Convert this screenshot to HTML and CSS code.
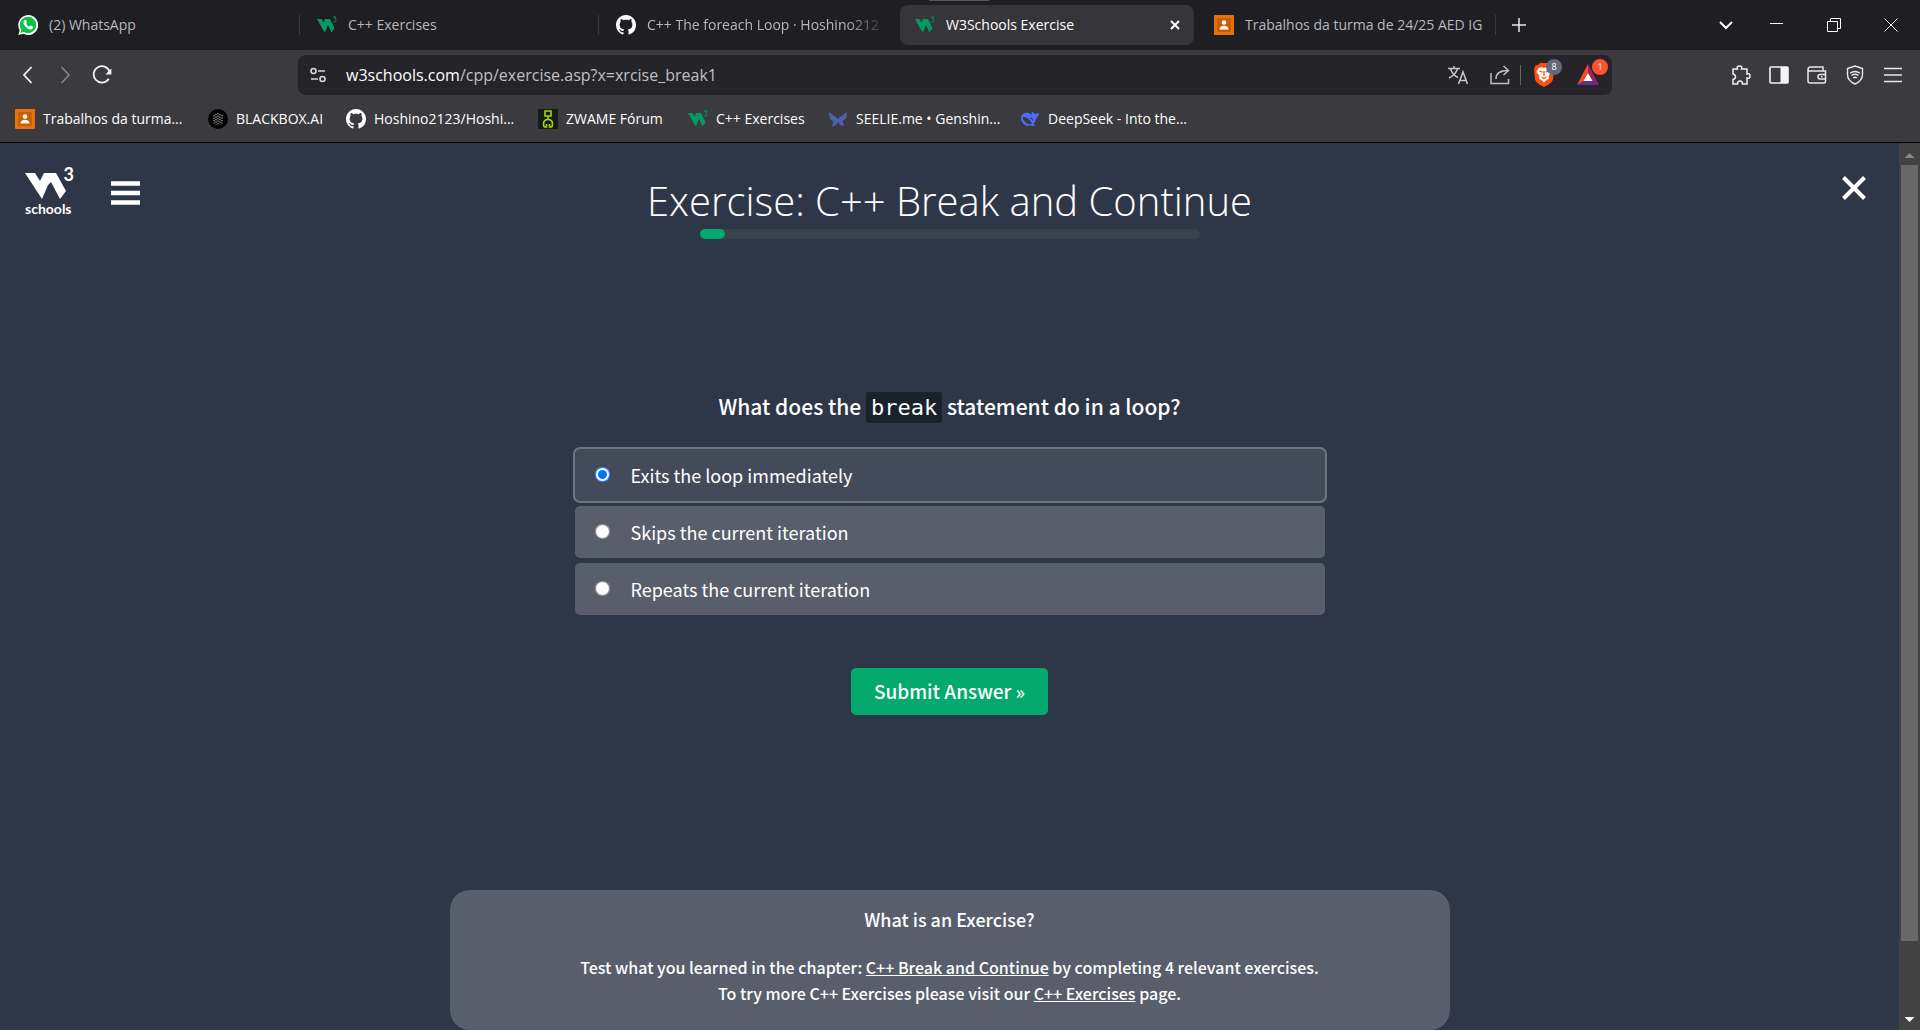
FILE: index.html
```html
<!DOCTYPE html>
<html lang="en">
<head>
<meta charset="utf-8">
<title>W3Schools Exercise</title>
<link rel="stylesheet" href="styles.css">
</head>
<body>
<svg class="defs" aria-hidden="true">
  <symbol id="w3" viewBox="0 0 20 20">
    <path d="M0 4h4.500l2 3.400L8 4h5l4.500 9-3 4.500L11 10l-3 7.500L5.500 14z" fill="#059862"/>
    <path d="M16 2h3l-1.300 2c2 .2 1.600 3-.4 3-1 0-1.500-.5-1.500-.5" fill="none" stroke="#059862"/>
  </symbol>
  <symbol id="github" viewBox="0 0 16 16">
    <path fill="#fff" d="M8 0C3.580 0 0 3.580 0 8c0 3.540 2.290 6.530 5.470 7.590.4.07.55-.17.55-.38 0-.19-.01-.82-.01-1.490-2.010.37-2.530-.49-2.690-.94-.09-.23-.48-.94-.82-1.130-.28-.15-.68-.52-.01-.53.63-.01 1.080.58 1.230.82.72 1.210 1.870.87 2.330.66.07-.52.28-.87.51-1.070-1.780-.2-3.640-.89-3.640-3.950 0-.87.31-1.590.82-2.150-.08-.2-.36-1.020.08-2.120 0 0 .67-.21 2.200.82.64-.18 1.320-.27 2-.27s1.360.09 2 .27c1.530-1.040 2.200-.82 2.200-.82.44 1.100.16 1.920.08 2.120.51.56.82 1.270.82 2.150 0 3.070-1.870 3.750-3.650 3.950.29.25.54.73.54 1.480 0 1.070-.01 1.930-.01 2.200 0 .21.15.46.55.38A8.010 8.010 0 0 0 16 8c0-4.420-3.580-8-8-8z"/>
  </symbol>
  <symbol id="classroom" viewBox="0 0 20 20">
    <rect width="20" height="20" rx="1" fill="#e8710a"/>
    <rect x="3" y="3" width="14" height="14" fill="#c75f00"/>
    <circle cx="10" cy="7.500" r="2.300" fill="#fff"/>
    <path d="M5.500 14.500c0-2.500 2-3.700 4.500-3.700s4.500 1.200 4.500 3.700z" fill="#fff"/>
  </symbol>
</svg>

<header class="browser">
  <div class="tabstrip">
    <nav class="tabs" aria-label="Tabs">
      <a class="tab" href="#"><svg class="icon" viewBox="0 0 20 20"><path d="M10 0a10 10 0 1 1-4.600 18.800L.3 20l1.400-4.800A10 10 0 0 1 10 0z" fill="#fff"/><circle cx="10" cy="10" r="8.300" fill="#0cc143"/><path d="M2.400 18l1.200-4 2.600 2.700z" fill="#0cc143"/><path d="M6.500 5.300c.7-.8 1.500-.5 1.700.1l.7 1.600c.2.600-.8 1.300-.8 1.600.7 1.500 1.800 2.500 3.300 3.200.4 0 1-1.300 1.500-1.200l2 1c.3.200.2 1.500-.4 2.100-1.500 1.500-4.100.5-6.200-1.300-2.700-2.400-3.800-5-1.800-7.100z" fill="#fff"/></svg><span class="tab-title">(2) WhatsApp</span></a>
      <a class="tab" href="#"><svg class="icon"><use href="#w3"/></svg><span class="tab-title">C++ Exercises</span></a>
      <a class="tab tab-before" href="#"><svg class="icon"><use href="#github"/></svg><span class="tab-title fade">C++ The foreach Loop · Hoshino212</span></a>
      <div class="tab active"><svg class="icon"><use href="#w3"/></svg><span class="tab-title">W3Schools Exercise</span><button class="bare" aria-label="Close tab"><svg width="10" height="10" viewBox="0 0 10 10"><path d="M1 1l8 8M9 1L1 9" stroke="#fff" stroke-width="2"/></svg></button></div>
      <a class="tab" href="#"><svg class="icon"><use href="#classroom"/></svg><span class="tab-title">Trabalhos da turma de 24/25 AED IG</span></a>
    </nav>
    <button class="bare new-tab" aria-label="New tab"><svg width="14" height="14" viewBox="0 0 14 14"><path d="M7 0v14M0 7h14" stroke="#e8e8e8" stroke-width="1.500"/></svg></button>
    <div class="window-controls">
      <button class="bare tab-search" aria-label="Search tabs"><svg width="14" height="14" viewBox="0 0 14 14"><path d="M1 4l6 6 6-6" fill="none" stroke="#fff" stroke-width="2"/></svg></button>
      <button class="bare" aria-label="Minimize"><svg width="14" height="14" viewBox="0 0 14 14"><path d="M0 5.500h13" stroke="#fff"/></svg></button>
      <button class="bare" aria-label="Restore"><svg width="14" height="14" viewBox="0 0 14 14"><path d="M.5 3.500h10v10H.5zM3.500 3.500v-3h10v10h-3" fill="none" stroke="#fff"/></svg></button>
      <button class="bare" aria-label="Close window"><svg width="14" height="14" viewBox="0 0 14 14"><path d="M.5.5l13 13M13.500.5l-13 13" stroke="#fff"/></svg></button>
    </div>
    <span class="grip"></span>
  </div>

  <div class="toolbar">
    <div class="nav-buttons">
      <button class="bare" aria-label="Back"><svg width="20" height="20" viewBox="0 0 20 20"><path d="M13.500 2L6 10l7.500 8" fill="none" stroke="#f2f2f2" stroke-width="1.800"/></svg></button>
      <button class="bare" aria-label="Forward"><svg width="20" height="20" viewBox="0 0 20 20"><path d="M6.500 2l7.500 8-7.500 8" fill="none" stroke="#88888b" stroke-width="1.500"/></svg></button>
      <button class="bare" aria-label="Reload"><svg width="20" height="20" viewBox="0 0 20 20"><path d="M16.800 13.800A8.200 8.200 0 1 1 18 8" fill="none" stroke="#f2f2f2" stroke-width="1.800"/><path d="M19.400 3.500v6h-6z" fill="#f2f2f2"/></svg></button>
    </div>
    <div class="address">
      <button class="bare" aria-label="Site settings"><svg width="16" height="16" viewBox="0 0 16 16" fill="none" stroke="#d8d8dc" stroke-width="1.600"><circle cx="3.500" cy="4" r="2.500"/><path d="M8 4h7M1 12h7"/><circle cx="12.500" cy="12" r="2.500"/></svg></button>
      <div class="url" role="textbox" aria-label="Address" tabindex="0"><span class="host">w3schools.com</span>/cpp/exercise.asp?x=xrcise_break1</div>
      <div class="address-tools">
        <button class="bare" aria-label="Translate"><svg width="20" height="20" viewBox="0 0 20 20" fill="none" stroke="#c8c8cc" stroke-width="1.500"><path d="M0 3.500h12M6 1v2.500M2.500 4c1.500 4 4 7 7.500 8.500M9.500 4C8 8 5 11 1 13M10.500 19L15 7l4.500 12M12 15.500h6"/></svg></button>
        <button class="bare" aria-label="Share"><svg width="20" height="20" viewBox="0 0 20 20" fill="none" stroke="#c0c0c4" stroke-width="1.500"><path d="M1 8v10.500h17.500V14M6 14c0-6 4-8.500 12-8.500M13.500 1l5 4.500-5 4.500"/></svg></button>
        <span class="divider"></span>
        <button class="bare badge-host" aria-label="Shields"><svg width="20" height="24" viewBox="0 0 20 24"><path d="M4 2l2-2h8l2 2 2.500.5L20 6l-1 10c-1 4-5 6-9 8-4-2-8-4-9-8L0 6l1.500-3.500z" fill="#fb5010"/><path d="M4.500 5l3-.7L10 5l2.500-.7 3 .7 2 4-3 4 .5 2.500-3 2L10 19.500l-2-2-3-2L5.500 13l-3-4z" fill="#fff"/><path d="M5.500 8l3 1.200M14.500 8l-3 1.200M10 8v5M7.500 14l2.500 1.500 2.500-1.500" fill="none" stroke="#fb5010" stroke-width="1.300"/></svg><span class="badge gray">8</span></button>
        <button class="bare badge-host" aria-label="Rewards"><svg width="24" height="24" viewBox="0 0 24 24"><path d="M12 1L1 22l7-4 4-8z" fill="#ff4724"/><path d="M12 1l11 21-7-4-4-8z" fill="#9e1f63"/><path d="M1 22h22l-7-4H8z" fill="#662d91"/><path d="M12 10l4.500 8h-9z" fill="#fff"/></svg><span class="badge red">1</span></button>
      </div>
    </div>
    <div class="extensions">
      <button class="bare" aria-label="Extensions"><svg width="20" height="20" viewBox="0 0 20 20"><path d="M2 4h4.500C5.500 1.500 7 1 8.500 1s3 .5 2 3H16v5c2.500-1 3 .5 3 2s-.5 3-3 2v6h-4.500c0-2.500-1-3-2.500-3s-2.500.5-2.500 3H2v-4.500c2-.5 2.500-1 2.500-2.500S4 9.500 2 9z" fill="none" stroke="#f0f0f0" stroke-width="1.500"/></svg></button>
      <button class="bare" aria-label="Sidebar"><svg width="20" height="20" viewBox="0 0 20 20"><rect x="1" y="2" width="18" height="16" rx="1" fill="none" stroke="#f4f4f4" stroke-width="1.600"/><path d="M11.500 2H19v16h-7.500z" fill="#f4f4f4"/></svg></button>
      <button class="bare" aria-label="Wallet"><svg width="20" height="20" viewBox="0 0 20 20" fill="none" stroke="#e8e8e8" stroke-width="1.500"><path d="M1 4.500V16q0 2 2 2h14q1.500 0 1.500-1.500V6H3Q1 6 1 4.200T3 2h13v4M19 9.500h-6q-2 0-2 2.200t2 2.300h6M14 11.700h1.500"/></svg></button>
      <button class="bare" aria-label="VPN"><svg width="20" height="20" viewBox="0 0 20 20" fill="none" stroke="#e8e8e8" stroke-width="1.400"><path d="M10 1l7.500 2.500v6c0 4-3 7.500-7.500 9.500-4.500-2-7.500-5.500-7.500-9.500v-6zM5 8.200q5-3.500 10 0M6.500 10.500q3.500-2.500 7 0M8.200 12.800q1.800-1.200 3.600 0"/></svg></button>
      <button class="bare" aria-label="Menu"><svg width="20" height="20" viewBox="0 0 20 20"><path d="M1 3.500h18M1 10h18M1 16.500h18" stroke="#e8e8e8" stroke-width="1.500"/></svg></button>
    </div>
  </div>

  <nav class="bookmarks" aria-label="Bookmarks">
    <a href="#"><svg class="icon"><use href="#classroom"/></svg>Trabalhos da turma...</a>
    <a href="#"><svg class="icon" viewBox="0 0 20 20"><circle cx="10" cy="10" r="10" fill="#000"/><path d="M10 4v12M6 6v8.500M14 6v8.500M8 5v10.500M12 5v10.500" stroke="#a8a8a8" stroke-width="1.300" stroke-dasharray="1.300 1.200"/></svg>BLACKBOX.AI</a>
    <a href="#"><svg class="icon"><use href="#github"/></svg>Hoshino2123/Hoshi...</a>
    <a href="#"><svg class="icon" viewBox="0 0 20 20"><rect width="20" height="20" fill="#161a16"/><path d="M7 2h6v5H7zM10 7v3M6 18l-.5-3q0-4.500 4.500-4.500t4.500 4.500l-.5 3M6 18h2.500v-3M14 18h-2.500v-3" fill="none" stroke="#a4d80c" stroke-width="1.600"/></svg>ZWAME Fórum</a>
    <a href="#"><svg class="icon"><use href="#w3"/></svg>C++ Exercises</a>
    <a href="#"><svg class="icon" viewBox="0 0 20 20"><path d="M1 3l7 5 2 2 2-2 7-5c0 5-1 8-4.500 8.500L16 17l-4-1-2-3-2 3-4 2 1.500-5.500C2 11 1 8 1 3z" fill="#4e5fb0"/></svg>SEELIE.me • Genshin...</a>
    <a href="#"><svg class="icon" viewBox="0 0 20 20"><path d="M1 9c0-4 4-6 8-5 1 .5 2 1 2.500 2 .5-1.500 0-2.500.5-3.500 1 .5 1.500 2 3 2.500 1.500 0 2.500-1 4-1 0 3-1.500 4.500-3 5 0 3-1.500 4.500-2.500 6l1.500 1.500c-1.500.8-3 .5-4 0C5.500 18 1 14 1 9z" fill="#4d6bfe"/><path d="M3 8.500c3-.5 7 2.500 8.500 6-3 1.500-7-1-8.500-6zM10 9q2.500 0 3 2.500" fill="#3b3b3f" stroke="#3b3b3f"/></svg>DeepSeek - Into the...</a>
  </nav>
</header>

<div class="viewport">
  <div class="page">
    <header class="page-header">
      <div class="header-left">
        <a class="logo" href="#" aria-label="W3Schools home">
          <span class="logo-top"><svg width="42" height="28" viewBox="0 0 42 28"><path d="M0 1h10l5 8 4-8h12l10 18-6 8-9-17-3 3-6 14z" fill="#fff"/></svg><span class="logo-three">3</span></span>
          <span class="logo-word">schools</span>
        </a>
        <button class="bare" aria-label="Open menu"><svg width="30" height="24" viewBox="0 0 30 24"><path d="M0 2.500h29M0 12h29M0 21.500h29" stroke="#fff" stroke-width="4.600"/></svg></button>
      </div>
      <div class="header-mid">
        <h1>Exercise: C++ Break and Continue</h1>
        <div class="progress" role="progressbar" aria-valuenow="5" aria-valuemin="0" aria-valuemax="100"><div class="progress-fill" style="width: 5%"></div></div>
      </div>
      <div class="header-right"><button class="bare" aria-label="Close exercise"><svg width="24" height="24" viewBox="0 0 24 24"><path d="M1.500 1.500l21 21M22.500 1.500l-21 21" stroke="#fff" stroke-width="4"/></svg></button></div>
    </header>

    <form class="exercise">
      <h2>What does the <code>break</code> statement do in a loop?</h2>
      <div class="options">
        <label class="option selected"><input type="radio" name="answer" checked>Exits the loop immediately</label>
        <label class="option"><input type="radio" name="answer">Skips the current iteration</label>
        <label class="option"><input type="radio" name="answer">Repeats the current iteration</label>
      </div>
      <button class="submit" type="button">Submit Answer »</button>
    </form>

    <section class="about">
      <h3>What is an Exercise?</h3>
      <p>Test what you learned in the chapter: <a href="#">C++ Break and Continue</a> by completing 4 relevant exercises.<br>To try more C++ Exercises please visit our <a href="#">C++ Exercises</a> page.</p>
    </section>
  </div>
  <div class="scrollbar" aria-hidden="true">
    <span class="arrow up"></span>
    <span class="track"><span class="thumb"></span></span>
    <span class="arrow down"></span>
  </div>
</div>
</body>
</html>
```
FILE: styles.css
```css
* { box-sizing: border-box; }

body {
  margin: 0;
  min-height: 100vh;
  display: flex;
  flex-direction: column;
  background: #2e3748;
  color: #fff;
  font-family: "Noto Sans CJK SC", "Open Sans", sans-serif;
}

a { color: inherit; }
svg { display: block; flex: none; }
.defs { position: absolute; width: 0; height: 0; }
.icon { width: 20px; height: 20px; }

.bare {
  display: flex;
  padding: 0;
  border: 0;
  background: none;
  color: inherit;
  font: inherit;
}

/* Browser chrome */
.browser {
  background: #3b3a3f;
  border-bottom: 1px solid #000;
  font-family: "Open Sans", sans-serif;
  font-size: 14px;
  line-height: 20px;
}

.tabstrip {
  position: relative;
  display: flex;
  align-items: center;
  height: 50px;
  background: #1f1e23;
}

.grip {
  position: absolute;
  top: 0;
  left: 929px;
  width: 60px;
  height: 1px;
  background: #55545a;
}

.tabs {
  display: grid;
  grid-template-columns: repeat(5, minmax(0, 299px));
  flex: 0 1 1496px;
  padding-left: 1px;
}

.tab {
  display: flex;
  align-items: center;
  gap: 11px;
  height: 40px;
  padding: 0 10px 0 17px;
  color: #b8b8bc;
  text-decoration: none;
  background: linear-gradient(#3b3a3f, #3b3a3f) right center / 1px 20px no-repeat;
}

.tab-before { background: none; }

.tab.active {
  margin-right: 3px;
  margin-left: 2px;
  padding-right: 14px;
  padding-left: 15px;
  border-radius: 8px;
  background: #36353a;
  color: #fff;
}

.tab-title {
  flex: 1;
  overflow: hidden;
  white-space: nowrap;
}

.fade { mask-image: linear-gradient(to right, #000 82%, transparent); }

.new-tab { margin-left: 16px; }

.window-controls {
  display: flex;
  gap: 43px;
  margin-left: auto;
  padding-right: 22px;
}

.tab-search { margin-right: -6px; }

.toolbar {
  display: flex;
  align-items: center;
  height: 50px;
}

.nav-buttons {
  display: flex;
  gap: 17px;
  width: 298px;
  padding-left: 18px;
}

.address {
  display: flex;
  align-items: center;
  flex: 1;
  height: 40px;
  padding: 0 12px;
  border-radius: 8px;
  background: #252429;
}

.url {
  flex: 1;
  margin-left: 20px;
  color: #c0c0c4;
  font-size: 16px;
}

.host { color: #fff; }

.address-tools {
  display: flex;
  align-items: center;
  gap: 22px;
}

.divider {
  width: 1px;
  height: 20px;
  margin: 0 -9px 0 -12px;
  background: #66666a;
}

.badge-host { position: relative; }

.badge {
  position: absolute;
  top: -4px;
  right: -8px;
  width: 16px;
  height: 16px;
  border-radius: 8px;
  font-size: 9px;
  line-height: 16px;
  text-align: center;
}

.gray { background: #646878; }
.red { background: #ff5230; }

.extensions {
  display: flex;
  justify-content: flex-end;
  gap: 18px;
  width: 308px;
  padding-right: 17px;
}

.bookmarks {
  display: grid;
  grid-template-columns: 193px 138px 192px 150px 140px 192px 200px;
  align-items: center;
  height: 42px;
  padding: 0 15px 4px;
}

.bookmarks a {
  display: flex;
  align-items: center;
  gap: 8px;
  text-decoration: none;
  white-space: nowrap;
}

/* Page */
.viewport {
  display: flex;
  flex: 1;
}

.page {
  display: flex;
  flex-direction: column;
  flex: 1;
}

.page-header {
  display: grid;
  grid-template-columns: 1fr auto 1fr;
  align-items: start;
  padding: 26px 25px 0;
}

.header-left {
  display: flex;
  align-items: center;
  gap: 38px;
}

.logo {
  display: flex;
  flex-direction: column;
  width: 48px;
  text-decoration: none;
  font-family: Lato, sans-serif;
  font-weight: 700;
}

.logo-top {
  position: relative;
  display: block;
  padding-top: 3px;
}

.logo-three {
  position: absolute;
  top: -5px;
  right: -1px;
  font-size: 18px;
  line-height: 20px;
}

.logo-word {
  font-size: 14px;
  line-height: 17px;
}

.header-mid {
  display: flex;
  flex-direction: column;
  align-items: center;
}

h1 {
  margin: 0;
  padding-top: 4px;
  font: 300 40px/56px "Open Sans", sans-serif;
}

.progress {
  width: 500px;
  height: 10px;
  border-radius: 5px;
  background: #38444d;
}

.progress-fill {
  height: 10px;
  border-radius: 5px;
  background: #04aa6d;
}

.header-right {
  display: flex;
  justify-content: flex-end;
  padding: 7px 8px 0 0;
}

.exercise {
  display: flex;
  flex-direction: column;
  align-items: center;
  margin: auto 0;
  padding-bottom: 26px;
}

h2 {
  margin: 0 0 26px;
  font-size: 21px;
  font-weight: 500;
  line-height: 34px;
}

code {
  display: inline-block;
  padding: 0 5px;
  border-radius: 3px;
  background: #18222c;
  font: 400 22px/31px "DejaVu Sans Mono", monospace;
}

.options {
  display: flex;
  flex-direction: column;
  gap: 5px;
  width: 750px;
}

.option {
  display: flex;
  align-items: center;
  gap: 21px;
  height: 52px;
  padding-left: 20px;
  border-radius: 5px;
  background: #585e6b;
  font-size: 18px;
  line-height: 30px;
}

.option.selected {
  background: #434b5b;
  box-shadow: 0 0 0 2px #6e7480;
}

.option input {
  width: 15px;
  height: 15px;
  margin: 0;
}

.submit {
  height: 47px;
  margin-top: 53px;
  padding: 0 23px;
  border: 0;
  border-radius: 5px;
  background: #04aa6d;
  color: #fff;
  font-family: inherit;
  font-size: 19px;
  font-weight: 500;
  line-height: 30px;
}

.about {
  width: 1000px;
  max-width: 100%;
  min-height: 140px;
  align-self: center;
  padding: 16px 20px 22px;
  border-radius: 20px;
  background: #585e6b;
  text-align: center;
}

h3 {
  margin: 0 0 22px;
  font-size: 18px;
  font-weight: 500;
  line-height: 26px;
}

.about p {
  margin: 0;
  font-size: 16px;
  font-weight: 500;
  line-height: 26px;
}

.scrollbar {
  display: flex;
  flex-direction: column;
  align-items: center;
  width: 21px;
  background: #424242;
}

.track {
  flex: 1;
  width: 17px;
}

.thumb {
  display: block;
  height: 92%;
  background: #686868;
}

.arrow {
  width: 10px;
  height: 5px;
  background: #868686;
  clip-path: polygon(50% 0, 100% 100%, 0 100%);
}

.up { margin: 10px 0 7px; }

.down {
  margin: 8px 0;
  background: #fff;
  clip-path: polygon(0 0, 100% 0, 50% 100%);
}
```
